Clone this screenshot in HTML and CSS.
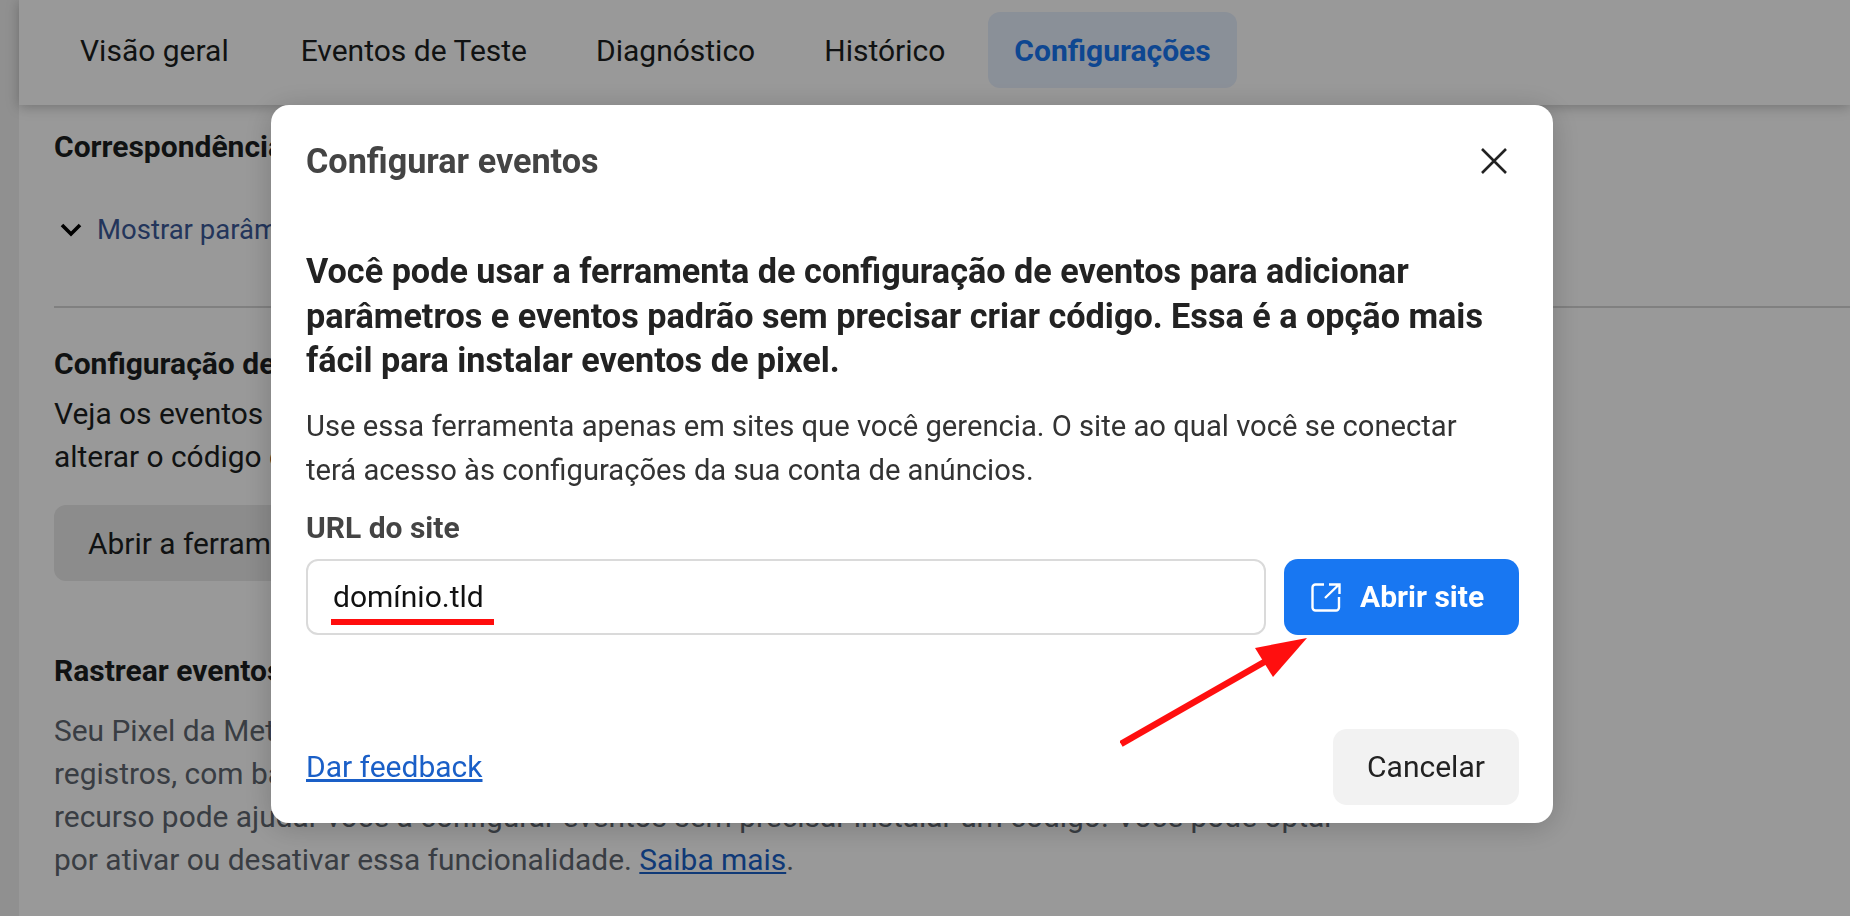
FILE: index.html
```html
<!DOCTYPE html>
<html lang="pt-BR">
<head>
  <meta charset="UTF-8">
  <meta name="viewport" content="width=device-width, initial-scale=1">
  <title>Configurar eventos</title>
  <link rel="stylesheet" href="styles.css">
</head>
<body>

  <div class="page">
    <nav class="tabs">
      <a class="tab">Visão geral</a>
      <a class="tab">Eventos de Teste</a>
      <a class="tab">Diagnóstico</a>
      <a class="tab">Histórico</a>
      <a class="tab active">Configurações</a>
    </nav>

    <main class="content">
      <h3 class="first">Correspondência avançada automática</h3>
      <div class="toggle">
        <svg width="22" height="14" viewBox="0 0 22 14"><path d="M2 2l9 9 9-9" fill="none" stroke="#000" stroke-width="3.6"/></svg>
        <a>Mostrar parâmetros de clientes</a>
      </div>
      <hr>
      <h3>Configuração de eventos</h3>
      <p>Veja os eventos do seu site e adicione novos sem precisar<br>alterar o código do site.</p>
      <button class="page-btn">Abrir a ferramenta de configuração</button>
      <h3 class="track">Rastrear eventos automaticamente</h3>
      <p class="muted">Seu Pixel da Meta pode rastrear eventos automaticamente usando os<br>registros, com base nas ações que as pessoas realizam no seu site. Esse<br>recurso pode ajudar você a configurar eventos sem precisar instalar um código. Você pode optar<br>por ativar ou desativar essa funcionalidade. <a class="link">Saiba mais</a>.</p>
    </main>
  </div>

  <div class="overlay">
    <div class="modal">
      <header class="modal-head">
        <h2>Configurar eventos</h2>
        <svg class="close" width="28" height="28" viewBox="0 0 28 28"><path d="M2 2l24 24M26 2L2 26" fill="none" stroke="#222" stroke-width="2.6"/></svg>
      </header>

      <p class="lead">Você pode usar a ferramenta de configuração de eventos para adicionar parâmetros e eventos padrão sem precisar criar código. Essa é a opção mais fácil para instalar eventos de pixel.</p>
      <p class="note">Use essa ferramenta apenas em sites que você gerencia. O site ao qual você se conectar terá acesso às configurações da sua conta de anúncios.</p>

      <label class="field-label">URL do site</label>
      <div class="field-row">
        <div class="url-input">domínio.tld<span class="underline"></span></div>
        <button class="btn-primary">
          <svg width="30" height="30" viewBox="0 0 30 30" fill="none" stroke="#fff" stroke-width="2.4"><path d="M13 2.500H4.500A3 3 0 0 0 1.500 5.500V25.500A3 3 0 0 0 4.500 28.500H25A3 3 0 0 0 28 25.500V15"/><path d="M14 16L28 2.500M18 2.500h10.500V12"/></svg>
          Abrir site
        </button>
      </div>

      <footer class="modal-foot">
        <a class="feedback">Dar feedback</a>
        <button class="btn-cancel">Cancelar</button>
      </footer>

      <svg class="arrow" width="200" height="120" viewBox="0 0 200 120"><path d="M1 107L146 24" fill="none" stroke="#ff0f0f" stroke-width="6.500"/><polygon points="187,1 135,11 153,40" fill="#ff0f0f"/></svg>
    </div>
  </div>

</body>
</html>
```

FILE: styles.css
```css
* {
  box-sizing: border-box;
}
html, body {
  height: 100%;
}
body {
  margin: 0;
  background: #f0f0f0;
  font-family: Roboto, "Liberation Sans", sans-serif;
  color: #1c1e21;
  overflow: hidden;
}
.page {
  margin-left: 19px;
  height: 916px;
  background: #fff;
}
.tabs {
  display: flex;
  gap: 17px;
  height: 105px;
  padding: 12px 0 17px 35px;
  background: #fff;
  box-shadow: 0 2px 12px rgba(0, 0, 0, .25);
  position: relative;
}
.tab {
  display: flex;
  align-items: center;
  padding: 0 26px;
  border-radius: 12px;
  font-size: 30px;
  color: #1c1e21;
}
.tab:first-child {
  margin-right: 3px;
}
.tab.active {
  background: #e7f0fd;
  color: #1877f2;
  font-weight: 700;
}
.content {
  padding: 0 0 0 35px;
  font-size: 29.900px;
  line-height: 43px;
}
.content h3 {
  margin: 0;
  font-size: 30px;
  line-height: 43px;
  font-weight: 700;
}
.content h3.first {
  padding-top: 20px;
}
.content p {
  margin: 7px 0 0;
  white-space: nowrap;
}
.toggle {
  display: flex;
  align-items: center;
  gap: 15px;
  margin-top: 40px;
  padding-left: 6px;
  color: #3b5998;
  font-size: 27.500px;
}
.content hr {
  margin: 55px 0 0;
  border: 0;
  border-top: 2px solid #d6d6d6;
}
.content hr + h3 {
  margin-top: 34px;
}
.page-btn {
  display: block;
  margin-top: 27px;
  width: 600px;
  height: 76px;
  padding: 0 34px;
  border: 0;
  border-radius: 12px;
  background: #e9e9e9;
  font: inherit;
  color: #1c1e21;
  text-align: left;
}
.track {
  margin-top: 68px !important;
}
.muted {
  color: #606770;
  margin-top: 17px !important;
}
.link {
  color: #1a5fc7;
  text-decoration: underline;
}

.overlay {
  position: fixed;
  inset: 0;
  background: rgba(0, 0, 0, .4);
}
.modal {
  position: absolute;
  left: 271px;
  top: 105px;
  width: 1282px;
  height: 718px;
  padding: 0 34px 0 35px;
  background: #fff;
  border-radius: 18px;
  box-shadow: 0 4px 30px rgba(0, 0, 0, .2);
  display: flex;
  flex-direction: column;
}
.modal-head {
  display: flex;
  justify-content: space-between;
  align-items: center;
  height: 112px;
  padding-right: 11px;
}
.modal-head h2 {
  margin: 0;
  font-size: 34.200px;
  font-weight: 700;
  color: #444;
}
.lead {
  margin: 32px 0 0;
  font-size: 34.200px;
  line-height: 44.500px;
  font-weight: 700;
  color: #222;
}
.note {
  margin: 21px 0 0;
  max-width: 1170px;
  font-size: 29.200px;
  line-height: 44px;
  color: #333;
}
.field-label {
  margin-top: 14px;
  font-size: 30px;
  line-height: 44px;
  font-weight: 700;
  color: #444;
}
.field-row {
  display: flex;
  gap: 18px;
  margin-top: 9px;
}
.url-input {
  position: relative;
  flex: 1;
  height: 76px;
  padding: 0 25px;
  border: 2px solid #dadada;
  border-radius: 12px;
  font-size: 30px;
  line-height: 71px;
  color: #111;
}
.underline {
  position: absolute;
  left: 23px;
  top: 58px;
  width: 163px;
  height: 6px;
  background: #ff0d0d;
}
.btn-primary {
  display: flex;
  align-items: center;
  gap: 19px;
  width: 235px;
  height: 76px;
  padding: 0 0 0 27px;
  border: 0;
  border-radius: 14px;
  background: #1877f2;
  color: #fff;
  font: 700 30px Roboto, sans-serif;
}
.modal-foot {
  display: flex;
  justify-content: space-between;
  align-items: center;
  margin-top: 94px;
}
.feedback {
  font-size: 30px;
  color: #1a5fc7;
  text-decoration: underline;
}
.btn-cancel {
  width: 186px;
  height: 76px;
  border: 0;
  border-radius: 14px;
  background: #f2f2f2;
  color: #222;
  font: 400 30px Roboto, sans-serif;
}
.arrow {
  position: absolute;
  left: 849px;
  top: 532px;
}
```
